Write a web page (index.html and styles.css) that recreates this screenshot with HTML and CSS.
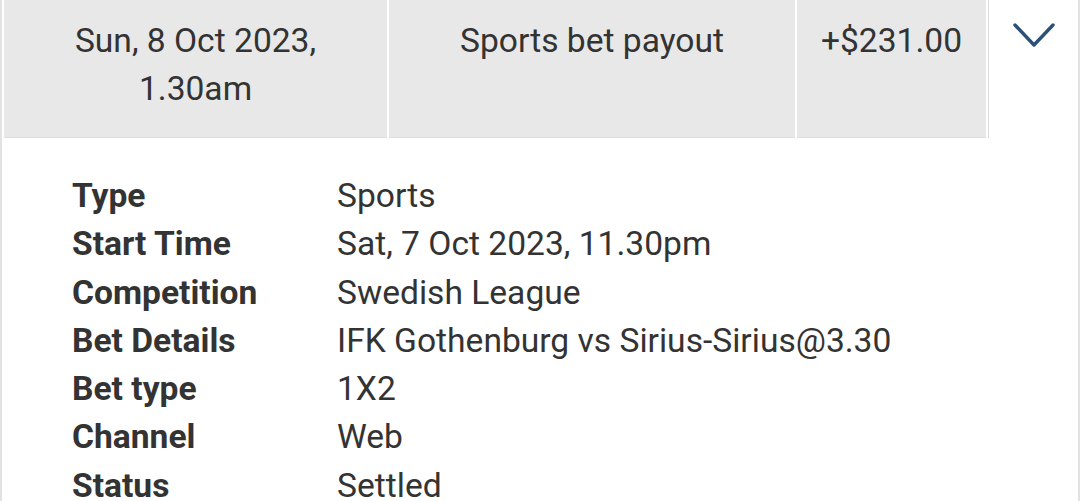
FILE: index.html
```html
<!DOCTYPE html>
<html>
<head>
<meta charset="utf-8">
<link rel="stylesheet" href="styles.css">
</head>
<body>
<div class="panel">
  <div class="summary">
    <div class="cell cell-date">Sun, 8 Oct 2023,<br>1.30am</div>
    <div class="cell cell-desc">Sports bet payout</div>
    <div class="cell cell-amount">+$231.00</div>
    <div class="toggle">
      <svg class="chevron" width="42" height="24" viewBox="0 0 42 24"><path d="M2 2 L21 22 L40 2" fill="none" stroke="#2b5178" stroke-width="3.4" stroke-linecap="round" stroke-linejoin="round"/></svg>
    </div>
  </div>
  <dl class="details">
    <dt>Type</dt><dd>Sports</dd>
    <dt>Start Time</dt><dd>Sat, 7 Oct 2023, 11.30pm</dd>
    <dt>Competition</dt><dd>Swedish League</dd>
    <dt>Bet Details</dt><dd>IFK Gothenburg vs Sirius-Sirius@3.30</dd>
    <dt>Bet type</dt><dd>1X2</dd>
    <dt>Channel</dt><dd>Web</dd>
    <dt>Status</dt><dd>Settled</dd>
  </dl>
</div>
</body>
</html>
```
FILE: styles.css
```css
html, body {
  margin: 0;
  padding: 0;
  background: #ffffff;
}
body {
  font-family: Roboto, "Liberation Sans", sans-serif;
  color: #333333;
  font-size: 33.6px;
  line-height: 48.3px;
}
.panel {
  border-left: 2px solid #e2e2e2;
  border-right: 2px solid #e2e2e2;
  min-height: 501px;
  box-sizing: border-box;
}
.summary {
  display: flex;
  gap: 2px;
  padding-left: 2px;
  height: 138px;
}
.cell {
  background: #e8e8e8;
  border-bottom: 1px solid #dedede;
  text-align: center;
  padding-top: 17px;
  box-sizing: border-box;
}
.cell-date { width: 383px; }
.cell-desc { width: 406px; }
.cell-amount { width: 189px; }
.toggle {
  flex: 1;
  border-left: 1px solid #dcdcdc;
  display: flex;
  justify-content: center;
  align-items: flex-start;
  padding-top: 23px;
}
.details {
  margin: 0;
  padding: 34px 0 0 70px;
  display: grid;
  grid-template-columns: 265px 1fr;
}
.details dt {
  font-weight: bold;
  margin: 0;
}
.details dd {
  margin: 0;
}
```
